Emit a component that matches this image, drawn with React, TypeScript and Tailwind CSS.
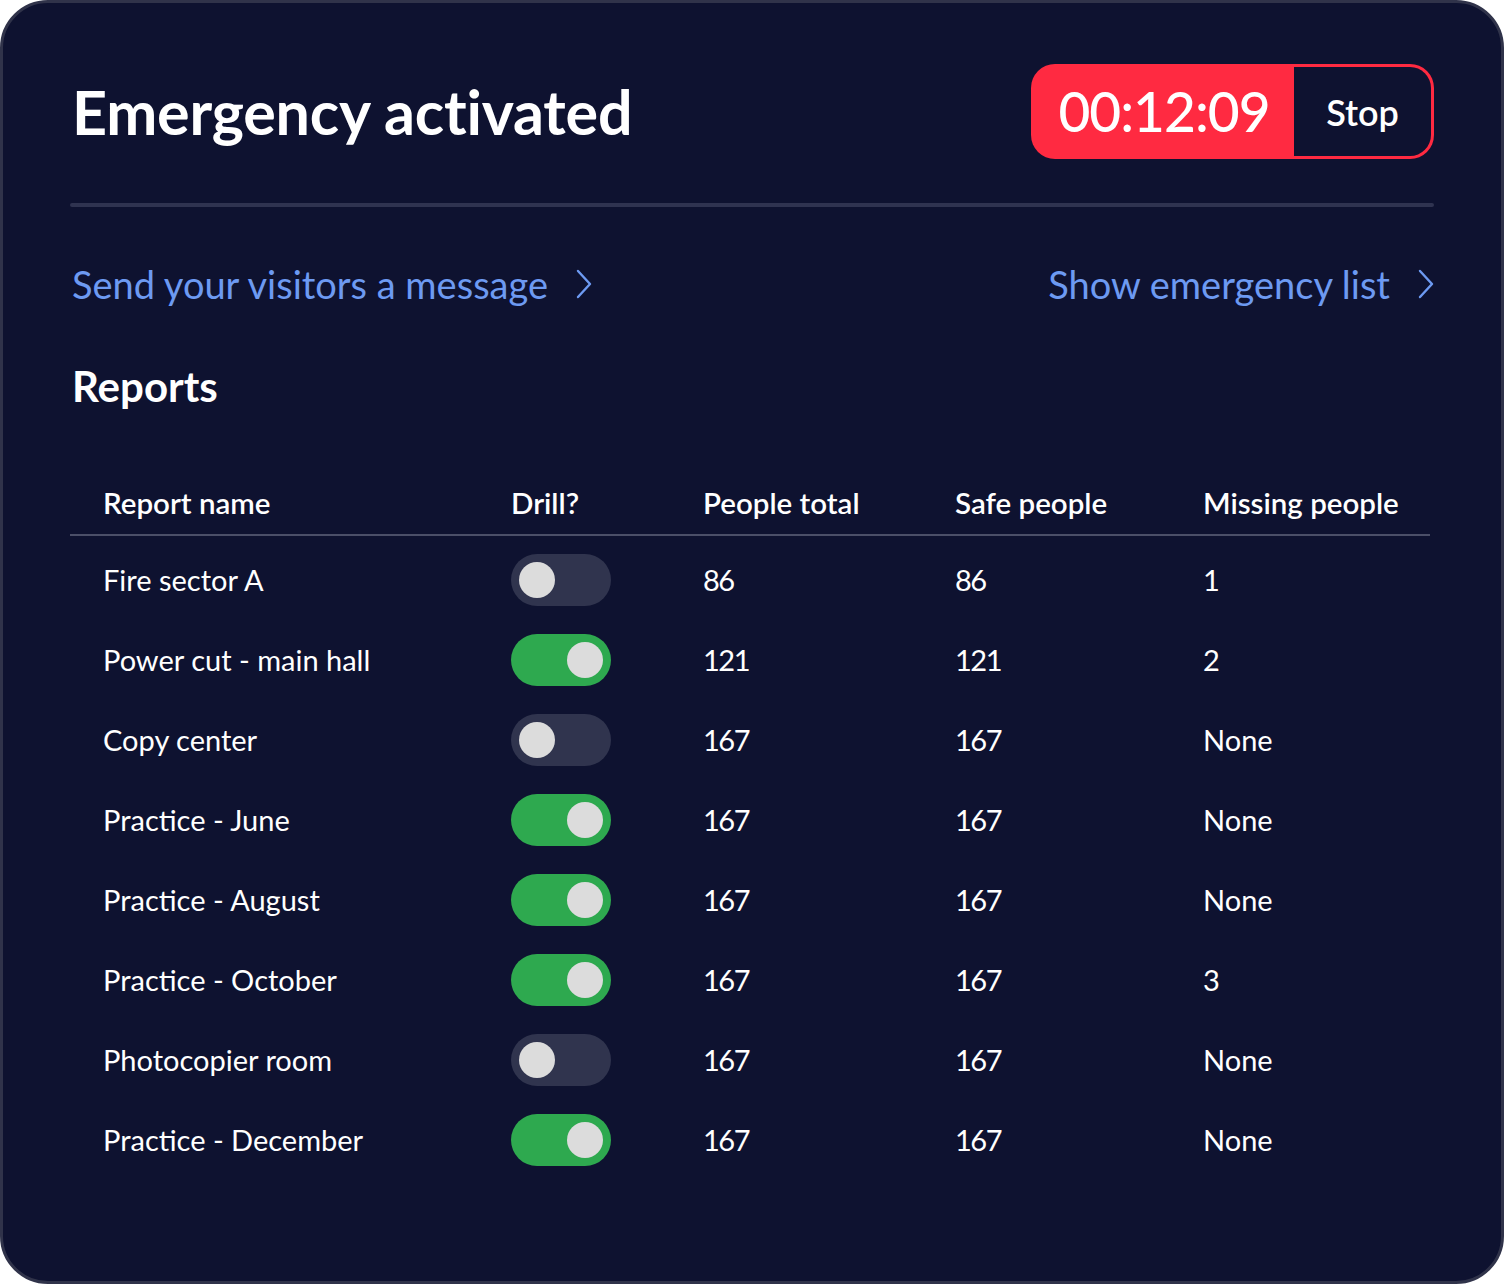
type Report = {
  name: string;
  drill: boolean;
  total: number;
  safe: number;
  missing: string;
};

const reports: Report[] = [
  { name: "Fire sector A", drill: false, total: 86, safe: 86, missing: "1" },
  { name: "Power cut - main hall", drill: true, total: 121, safe: 121, missing: "2" },
  { name: "Copy center", drill: false, total: 167, safe: 167, missing: "None" },
  { name: "Practice - June", drill: true, total: 167, safe: 167, missing: "None" },
  { name: "Practice - August", drill: true, total: 167, safe: 167, missing: "None" },
  { name: "Practice - October", drill: true, total: 167, safe: 167, missing: "3" },
  { name: "Photocopier room", drill: false, total: 167, safe: 167, missing: "None" },
  { name: "Practice - December", drill: true, total: 167, safe: 167, missing: "None" },
];

function Toggle({ on }: { on: boolean }) {
  return (
    <div
      className={
        on
          ? "flex h-[52px] w-[100px] items-center justify-end rounded-full bg-[#2ea94f] px-[8px]"
          : "flex h-[52px] w-[100px] items-center justify-start rounded-full bg-[#30344e] px-[8px]"
      }
    >
      <span className="block h-[36px] w-[36px] rounded-full bg-[#dcdcdc]" />
    </div>
  );
}

function Chevron() {
  return (
    <svg width="16" height="30" viewBox="0 0 16 30" fill="none" className="shrink-0">
      <polyline
        points="2,2 14,15 2,28"
        stroke="currentColor"
        strokeWidth="2.4"
        strokeLinecap="round"
        strokeLinejoin="round"
      />
    </svg>
  );
}

function LinkRow({ label }: { label: string }) {
  return (
    <a className="flex items-center gap-[28px] text-[38px] leading-[44px] text-[#6d9af2]">
      {label}
      <Chevron />
    </a>
  );
}

export default function App() {
  return (
    <div className="bg-white" style={{ fontFamily: "Lato, 'Noto Sans', sans-serif" }}>
      <div className="h-[1284px] w-[1504px] rounded-[48px] border-[3px] border-[#30334a] bg-[#0e1230] px-[67px] pt-[61px] text-white">
        <header className="flex h-[95px] items-center justify-between">
          <h1 className="pl-[2px] text-[61px] font-bold tracking-[-0.2px]">Emergency activated</h1>
          <div className="flex h-[95px] w-[403px] overflow-hidden rounded-[24px] bg-[#ff2a41] p-[3px]">
            <span className="flex w-[260px] items-center justify-center text-[55px] font-medium tracking-[-1px]">
              00:12:09
            </span>
            <button className="flex flex-1 items-center justify-center rounded-r-[21px] bg-[#0e1230] text-[36px] font-semibold text-white">
              Stop
            </button>
          </div>
        </header>

        <div className="mt-[44px] h-[4px] rounded-full bg-[#2f3350]" />

        <div className="mt-[55px] flex items-center justify-between pl-[2px]">
          <LinkRow label="Send your visitors a message" />
          <LinkRow label="Show emergency list" />
        </div>

        <h2 className="mt-[56px] pl-[2px] text-[42px] font-bold leading-[48px]">Reports</h2>

        <div className="mt-[60px] w-[1360px]">
          <div className="grid h-[66px] grid-cols-[408px_192px_252px_248px_1fr] items-center border-b-2 border-[#4b4f68] pl-[33px] pt-[2px] text-[29.5px] font-semibold">
            <span>Report name</span>
            <span>Drill?</span>
            <span>People total</span>
            <span>Safe people</span>
            <span>Missing people</span>
          </div>
          <div className="mt-[4px]">
            {reports.map((r) => (
              <div
                key={r.name}
                className="grid h-[80px] grid-cols-[408px_192px_252px_248px_1fr] items-center pl-[33px] text-[29px]"
              >
                <span>{r.name}</span>
                <Toggle on={r.drill} />
                <span className="tracking-[-1.5px]">{r.total}</span>
                <span className="tracking-[-1.5px]">{r.safe}</span>
                <span>{r.missing}</span>
              </div>
            ))}
          </div>
        </div>
      </div>
    </div>
  );
}
